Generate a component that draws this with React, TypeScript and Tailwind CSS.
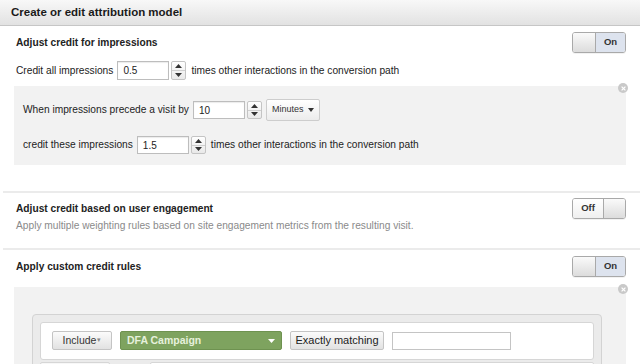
import React from 'react';

const Toggle: React.FC<{ on: boolean }> = ({ on }) => (
  <div className="flex h-[21px] w-[54px] overflow-hidden rounded-[3px] border border-[#a9a9a9] shadow-[0_1px_0_rgba(0,0,0,0.05)]">
    {on ? (
      <>
        <div className="w-[23px] border-r border-[#a9a9a9] bg-gradient-to-b from-[#fafafa] to-[#dcdcdc]" />
        <div className="flex flex-1 items-center justify-center bg-[#dde3ee] text-[9.5px] font-bold text-[#333]">On</div>
      </>
    ) : (
      <>
        <div className="flex w-[31px] items-center justify-center border-r border-[#a9a9a9] bg-gradient-to-b from-white to-[#efefef] text-[9.5px] font-bold text-[#333]">Off</div>
        <div className="flex-1 bg-gradient-to-b from-[#fafafa] to-[#dcdcdc]" />
      </>
    )}
  </div>
);

const Spinner: React.FC<{ h: number }> = ({ h }) => (
  <div
    className="flex w-[15px] flex-col overflow-hidden rounded-[2px] border border-[#c4c4c4] bg-gradient-to-b from-white to-[#e9e9e9]"
    style={{ height: h }}
  >
    <div className="flex flex-1 items-center justify-center border-b border-[#cfcfcf]">
      <svg width="7" height="4" viewBox="0 0 7 4"><path d="M3.5 0L7 4H0z" fill="#333" /></svg>
    </div>
    <div className="flex flex-1 items-center justify-center">
      <svg width="7" height="4" viewBox="0 0 7 4"><path d="M0 0h7L3.5 4z" fill="#333" /></svg>
    </div>
  </div>
);

const NumInput: React.FC<{ value: string; h: number }> = ({ value, h }) => (
  <div className="flex items-center gap-[2px]">
    <div
      className="flex w-[52px] items-center border border-[#bdbdbd] bg-white pl-[5px] text-[10px] text-[#222] shadow-[inset_0_1px_1px_rgba(0,0,0,0.08)]"
      style={{ height: h }}
    >
      {value}
    </div>
    <Spinner h={h} />
  </div>
);

const CloseDot: React.FC = () => (
  <div className="absolute right-[-2px] top-[-3px] flex h-[10px] w-[10px] items-center justify-center rounded-full bg-[#c9c9c9]">
    <svg width="5" height="5" viewBox="0 0 5 5"><path d="M0.6 0.6L4.4 4.4M4.4 0.6L0.6 4.4" stroke="#fff" strokeWidth="1.2" /></svg>
  </div>
);

export default function App() {
  return (
    <div className="h-[364px] w-[640px] overflow-hidden bg-white font-['Liberation_Sans',Arial,sans-serif] text-[#222]">
      <div className="flex h-[26px] items-center border-b border-[#c6c6c6] bg-gradient-to-b from-[#f8f8f8] to-[#e2e2e2] pl-[11px] text-[11.5px] font-bold text-[#1a1a1a]">
        Create or edit attribution model
      </div>

      <div className="px-[14px] pt-[6px]">
        <div className="flex items-center justify-between">
          <div className="ml-[2px] text-[10.2px] font-bold">Adjust credit for impressions</div>
          <Toggle on />
        </div>
        <div className="ml-[2px] mt-[8px] flex h-[19px] items-center gap-[4px] text-[10.2px]">
          <span>Credit all impressions</span>
          <NumInput value="0.5" h={19} />
          <span className="ml-[1px]">times other interactions in the conversion path</span>
        </div>
        <div className="relative mt-[6px] bg-[#f2f2f2] pb-[11px] pl-[9px] pt-[13px] text-[10.2px]">
          <CloseDot />
          <div className="flex h-[22px] items-center gap-[4px]">
            <span>When impressions precede a visit by</span>
            <NumInput value="10" h={18} />
            <div className="flex h-[22px] w-[54px] items-center justify-between rounded-[2px] border border-[#cdcdcd] bg-gradient-to-b from-white to-[#ececec] px-[5px] text-[9px] text-[#333]">
              <span>Minutes</span>
              <svg width="6" height="4" viewBox="0 0 6 4"><path d="M0 0h6L3 4z" fill="#333" /></svg>
            </div>
          </div>
          <div className="mt-[15px] flex h-[18px] items-center gap-[4px]">
            <span>credit these impressions</span>
            <NumInput value="1.5" h={18} />
            <span className="ml-[1px]">times other interactions in the conversion path</span>
          </div>
        </div>
      </div>

      <div className="ml-[3px] mt-[26px] h-[2px] bg-[#ebebeb]" />

      <div className="flex items-start justify-between px-[14px] pb-[15px] pt-[5px]">
        <div className="ml-[2px] mt-[4px] flex flex-col gap-[3px] text-[10.2px] leading-[14px]">
          <div className="font-bold">Adjust credit based on user engagement</div>
          <div className="text-[#8a8a8a]">Apply multiple weighting rules based on site engagement metrics from the resulting visit.</div>
        </div>
        <Toggle on={false} />
      </div>

      <div className="ml-[3px] h-[2px] bg-[#ebebeb]" />

      <div className="px-[14px] pt-[6px]">
        <div className="flex items-center justify-between">
          <div className="ml-[2px] text-[10.2px] font-bold">Apply custom credit rules</div>
          <Toggle on />
        </div>
        <div className="relative mt-[10px] bg-[#f2f2f2] pl-[18px] pr-[24px] pt-[27px]">
          <CloseDot />
          <div className="rounded-[4px] border border-[#d3d3d3] bg-[#ebebeb] px-[7px] pt-[7px]">
            <div className="flex items-center gap-[8px] rounded-[3px] border border-[#d6d6d6] bg-white pb-[9px] pl-[11px] pt-[8px]">
              <div className="flex h-[19px] w-[60px] items-center justify-center rounded-[2px] border border-[#c4c4c4] bg-gradient-to-b from-[#fbfbfb] to-[#e2e2e2] text-[10.5px] text-[#333]">
                Include<span className="ml-[1px] text-[7px] text-[#888]">▾</span>
              </div>
              <div className="flex h-[19px] w-[162px] items-center justify-between rounded-[2px] border border-[#6e9250] bg-[#7ea35f] px-[6px] text-[10.5px] font-bold text-[#e6f1dc]">
                <span>DFA Campaign</span>
                <svg width="7" height="4" viewBox="0 0 7 4"><path d="M0 0h7L3.5 4z" fill="#fff" /></svg>
              </div>
              <div className="flex h-[19px] w-[94px] items-center justify-center rounded-[2px] border border-[#c4c4c4] bg-gradient-to-b from-[#fbfbfb] to-[#e2e2e2] text-[11px] text-[#222]">
                Exactly matching
              </div>
              <div className="h-[18px] w-[119px] border border-[#c4c4c4] bg-white" />
            </div>
            <div className="mt-[2px] flex gap-[40px]">
              <div className="h-[20px] w-[70px] rounded-t-[2px] border border-[#d6d6d6] bg-[#f7f7f7]" />
              <div className="h-[20px] flex-1 rounded-t-[2px] border border-[#d6d6d6] bg-white" />
            </div>
          </div>
        </div>
      </div>
    </div>
  );
}
